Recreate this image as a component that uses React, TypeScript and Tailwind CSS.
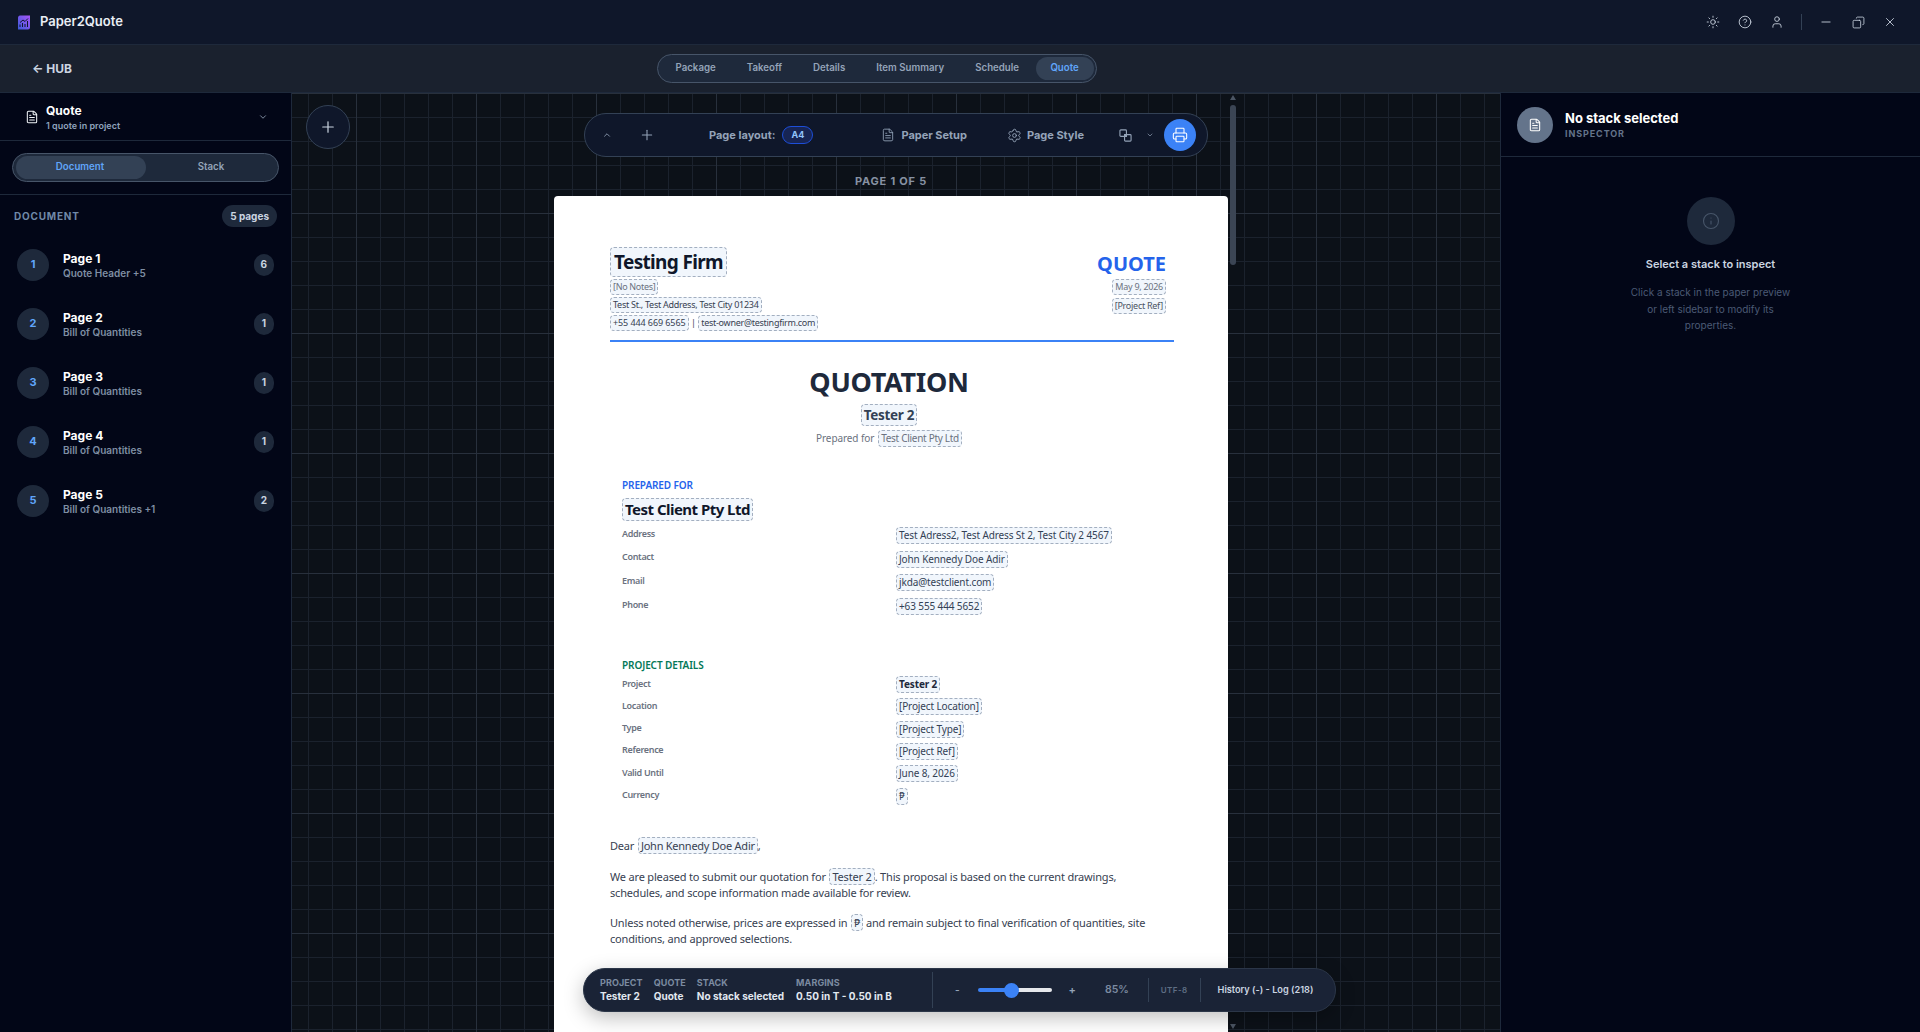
import React from "react";
import { Sun, CircleHelp, User, Minus, Copy, X, ChevronUp, ChevronDown, Plus, FileText, Settings, Printer, Info } from "lucide-react";

function Chip({ c = "", children }: { c?: string; children: React.ReactNode }) {
  return (
    <span className={`inline-block rounded-[4px] border border-dashed border-[#a3afc0] bg-[#f1f6fc] px-[2px] whitespace-nowrap ${c}`}>
      {children}
    </span>
  );
}

function Logo() {
  return (
    <svg width="14" height="15" viewBox="0 0 14 15">
      <defs>
        <linearGradient id="lg" x1="1" y1="0" x2="0" y2="1">
          <stop offset="0" stopColor="#a855f7" />
          <stop offset="1" stopColor="#3b5bdb" />
        </linearGradient>
      </defs>
      <path d="M3 0.5H13V12.5C13 13.6 12.1 14.5 11 14.5H1V3C1 1.6 1.8 0.5 3 0.5Z" fill="url(#lg)" />
      <path d="M3 12V9.5M5.5 12V8M8 12V9M10.5 12V6M3 7.5L6 5L8 6.5L11 3.5" stroke="#0f172a" strokeWidth="1" fill="none" />
    </svg>
  );
}

function Overlap() {
  return (
    <svg width="13" height="13" viewBox="0 0 14 14" fill="none" stroke="#94a3b8" strokeWidth="1.2">
      <rect x="1" y="1" width="7" height="7" rx="1" />
      <rect x="6" y="6" width="7" height="7" rx="1" />
      <rect x="6" y="6" width="2" height="2" fill="#94a3b8" />
    </svg>
  );
}

const tabs = ["Package", "Takeoff", "Details", "Item Summary", "Schedule"];

const pages = [
  ["1", "Page 1", "Quote Header +5", "6"],
  ["2", "Page 2", "Bill of Quantities", "1"],
  ["3", "Page 3", "Bill of Quantities", "1"],
  ["4", "Page 4", "Bill of Quantities", "1"],
  ["5", "Page 5", "Bill of Quantities +1", "2"],
];

const client = [
  ["Address", "Test Adress2, Test Adress St 2, Test City 2 4567"],
  ["Contact", "John Kennedy Doe Adir"],
  ["Email", "jkda@testclient.com"],
  ["Phone", "+63 555 444 5652"],
];

const project = [
  ["Project", "Tester 2"],
  ["Location", "[Project Location]"],
  ["Type", "[Project Type]"],
  ["Reference", "[Project Ref]"],
  ["Valid Until", "June 8, 2026"],
  ["Currency", "₱"],
];

function Stat({ label, value, c = "" }: { label: string; value: string; c?: string }) {
  return (
    <div className={`flex flex-col shrink-0 ${c}`}>
      <span className="text-[9px] leading-[12px] font-bold tracking-[0.01em] text-[#7c8ba1]">{label}</span>
      <span className="text-[10px] leading-[14px] font-bold text-[#e2e8f0] whitespace-nowrap">{value}</span>
    </div>
  );
}

export default function App() {
  return (
    <div className="w-[1920px] h-[1032px] overflow-hidden flex flex-col bg-[#020617] font-['Inter',sans-serif]">
      {/* title bar */}
      <header className="h-[45px] shrink-0 flex items-center bg-[#0f172a] border-b border-[#1e293b] pl-[17px]">
        <Logo />
        <span className="ml-[9px] text-[13px] font-semibold text-[#e9eef5]">Paper2Quote</span>
        <div className="ml-auto flex items-center text-[#cbd5e1]">
          <div className="w-[32px] flex justify-center"><Sun size={14} strokeWidth={1.5} /></div>
          <div className="w-[32px] flex justify-center"><CircleHelp size={14} strokeWidth={1.5} /></div>
          <div className="w-[32px] flex justify-center"><User size={14} strokeWidth={1.5} /></div>
          <div className="w-px h-[16px] bg-[#334155] mx-[8px]" />
          <div className="w-[32px] flex justify-center"><Minus size={14} strokeWidth={1.5} /></div>
          <div className="w-[32px] flex justify-center"><Copy size={13} strokeWidth={1.5} className="scale-x-[-1]" /></div>
          <div className="w-[32px] flex justify-center"><X size={14} strokeWidth={1.5} /></div>
          <div className="w-[14px]" />
        </div>
      </header>

      {/* nav bar */}
      <div className="h-[48px] shrink-0 flex items-center bg-[#1a212e] border-b border-[#1e293b] pl-[32px]">
        <span className="text-[12px] font-bold text-[#cbd5e1] w-[625px] whitespace-nowrap">← HUB</span>
        <nav className="h-[29px] flex items-center rounded-full bg-[#1e293b] border border-[#475569] pl-[2px] pr-[2px]">
          {tabs.map((t) => (
            <span key={t} className="px-[15.5px] text-[9.7px] font-semibold text-[#94a3b8] whitespace-nowrap">{t}</span>
          ))}
          <span className="ml-[1px] h-[23px] w-[58px] flex items-center justify-center rounded-full bg-[#334155] text-[9.7px] font-semibold text-[#60a5fa]">Quote</span>
        </nav>
      </div>

      <div className="flex-1 flex min-h-0">
        {/* left sidebar */}
        <aside className="w-[292px] shrink-0 border-r border-[#1e293b] bg-[#020617] flex flex-col">
          <div className="h-[48px] shrink-0 border-b border-[#1e293b] flex items-center pl-[25px] pr-[23px]">
            <FileText size={14} strokeWidth={1.8} className="text-[#f1f5f9]" />
            <div className="ml-[7px] flex flex-col">
              <span className="text-[12px] leading-[17px] font-bold text-white">Quote</span>
              <span className="text-[9px] leading-[13px] font-semibold text-[#8fa3bd]">1 quote in project</span>
            </div>
            <ChevronDown size={10} strokeWidth={2} className="ml-auto text-[#94a3b8]" />
          </div>
          <div className="h-[54px] shrink-0 border-b border-[#1e293b] flex items-center px-[12px]">
            <div className="w-full h-[29px] rounded-full bg-[#1e293b] border border-[#475569] flex items-center pl-[3px]">
              <span className="w-[130px] h-[23px] pr-[2px] flex items-center justify-center rounded-full bg-[#334155] text-[9.7px] font-semibold text-[#60a5fa]">Document</span>
              <span className="flex-1 pr-[2px] text-center text-[9.7px] font-semibold text-[#94a3b8]">Stack</span>
            </div>
          </div>
          <div className="flex items-center justify-between pl-[14px] pr-[14px] mt-[10px] h-[22px]">
            <span className="text-[10px] font-bold tracking-[0.08em] text-[#7089a8]">DOCUMENT</span>
            <span className="h-[22px] px-[8px] flex items-center rounded-full bg-[#1e293b] text-[10px] font-bold text-[#cbd5e1]">5 pages</span>
          </div>
          <div className="mt-[8px] flex flex-col">
            {pages.map(([n, title, sub, count]) => (
              <div key={n} className="h-[59px] flex items-center pl-[17px] pr-[17px]">
                <span className="w-[32px] h-[32px] shrink-0 rounded-full bg-[#1e293b] flex items-center justify-center text-[11px] font-bold text-[#60a5fa]">{n}</span>
                <div className="ml-[14px] mt-[2px] flex flex-col">
                  <span className="text-[12px] leading-[15px] font-bold text-white">{title}</span>
                  <span className="mt-[1px] text-[10px] leading-[13px] font-semibold text-[#7f8ea3]">{sub}</span>
                </div>
                <span className="ml-auto min-w-[20px] h-[22px] px-[7px] flex items-center justify-center rounded-full bg-[#1e293b] text-[10px] font-bold text-[#cbd5e1]">{count}</span>
              </div>
            ))}
          </div>
        </aside>

        {/* canvas */}
        <main className="relative flex-1 min-w-0 overflow-hidden flex flex-col items-center pt-[20px] bg-[#0c1118] bg-[linear-gradient(#28303c_1px,transparent_1px),linear-gradient(90deg,#28303c_1px,transparent_1px),linear-gradient(#1b222d_1px,transparent_1px),linear-gradient(90deg,#1b222d_1px,transparent_1px)] bg-[size:120px_120px,120px_120px,24px_24px,24px_24px] bg-[position:0_0,64px_0,0_0,16px_0]">
          {/* toolbar */}
          <div className="w-[624px] h-[44px] shrink-0 flex items-center rounded-full bg-[#0f172a] border border-[#334155] text-[#94a3b8] relative">
            <ChevronUp size={10} strokeWidth={2} className="ml-[17px]" />
            <Plus size={16} strokeWidth={1.6} className="ml-[27px]" />
            <span className="ml-[54px] text-[11px] font-bold whitespace-nowrap">Page layout:</span>
            <span className="ml-[7px] w-[31px] h-[18px] flex items-center justify-center rounded-full bg-[#172554] border border-[#1d4ed8] text-[9px] font-bold text-[#93c5fd]">A4</span>
            <FileText size={14} strokeWidth={1.5} className="ml-[68px]" />
            <span className="ml-[6px] text-[11px] font-bold whitespace-nowrap">Paper Setup</span>
            <Settings size={15} strokeWidth={1.5} className="ml-[40px]" />
            <span className="ml-[5px] text-[11px] font-bold whitespace-nowrap">Page Style</span>
            <span className="ml-[35px]"><Overlap /></span>
            <ChevronDown size={8} strokeWidth={2} className="ml-[14px]" />
            <span className="ml-[10px] w-[32px] h-[32px] rounded-full bg-[#3b82f6] flex items-center justify-center text-white">
              <Printer size={16} strokeWidth={1.6} />
            </span>
          </div>

          <div className="w-full flex flex-col items-center pr-[10px]">
            <div className="mt-[17px] h-[14px] flex items-center text-[11px] font-bold tracking-[0.07em] text-[#8792a3] whitespace-nowrap">PAGE 1 OF 5</div>

            {/* paper */}
            <article className="mt-[8px] w-[674px] h-[1000px] shrink-0 rounded-[4px] bg-white pt-[51px] pl-[56px] pr-[54px] font-['Noto_Sans',sans-serif] text-[#1e293b] tracking-[-0.02em]">
              <div className="flex justify-between border-b-2 border-[#3b82f6] pb-[9px]">
                <div className="flex flex-col items-start">
                  <Chip c="h-[30px] px-[3px] text-[19px] leading-[28px] font-bold text-[#0f172a] tracking-[-0.035em]">Testing Firm</Chip>
                  <Chip c="mt-[2px] h-[16px] text-[9px] leading-[14px] text-[#6b7280]">[No Notes]</Chip>
                  <Chip c="mt-[2px] h-[16px] text-[9px] leading-[14px] text-[#374151] tracking-[-0.03em]">Test St., Test Address, Test City 01234</Chip>
                  <div className="mt-[2px] flex items-center gap-[2.5px] text-[9px] text-[#374151]">
                    <Chip c="h-[16px] leading-[14px] tracking-[-0.01em]">+55 444 669 6565</Chip>
                    <span>|</span>
                    <Chip c="h-[16px] leading-[14px] tracking-[-0.03em]">test-owner@testingfirm.com</Chip>
                  </div>
                </div>
                <div className="flex flex-col items-end pr-[8px]">
                  <span className="mt-[3px] text-[20px] leading-[27px] font-bold text-[#2563eb] tracking-normal">QUOTE</span>
                  <Chip c="mt-[2px] h-[16px] text-[9px] leading-[14px] text-[#6b7280] tracking-[-0.03em]">May 9, 2026</Chip>
                  <Chip c="mt-[3px] h-[16px] text-[9px] leading-[14px] text-[#4b5563] tracking-[-0.03em]">[Project Ref]</Chip>
                </div>
              </div>

              <div className="flex flex-col items-center pr-[6px]">
                <h1 className="mt-[21px] text-[27px] leading-[38px] font-bold text-[#1e293b]">QUOTATION</h1>
                <Chip c="mt-[3px] h-[22px] px-[2px] text-[13.5px] leading-[20px] font-bold text-[#334155]">Tester 2</Chip>
                <div className="mt-[4px] flex items-center gap-[4px] text-[10px] text-[#6b7280] tracking-[-0.01em]">
                  <span>Prepared for</span>
                  <Chip c="h-[17px] leading-[15px] tracking-[-0.03em]">Test Client Pty Ltd</Chip>
                </div>
              </div>

              <section className="mt-[31px] pl-[12px] text-[10px]">
                <h2 className="h-[14px] leading-[14px] text-[10px] font-semibold tracking-[-0.01em] text-[#2563eb]">PREPARED FOR</h2>
                <Chip c="mt-[6px] h-[23px] text-[15px] leading-[21px] font-bold text-[#0f172a] tracking-[-0.035em]">Test Client Pty Ltd</Chip>
                <div className="mt-[3px] flex flex-col">
                  {client.map(([k, v]) => (
                    <div key={k} className="h-[23.6px] grid grid-cols-[274px_1fr] items-center">
                      <span className="font-semibold text-[9px] leading-[13px] text-[#6b7280] -mt-[5px]">{k}</span>
                      <span className="flex"><Chip c="h-[17px] leading-[15px] text-[#334155] tracking-[-0.012em]">{v}</Chip></span>
                    </div>
                  ))}
                </div>
              </section>

              <section className="mt-[40px] pl-[12px] text-[10px]">
                <h2 className="h-[14px] leading-[14px] text-[10px] font-semibold tracking-[-0.01em] text-[#047857]">PROJECT DETAILS</h2>
                <div className="mt-[1px] flex flex-col">
                  {project.map(([k, v], i) => (
                    <div key={k} className="h-[22.3px] grid grid-cols-[274px_1fr] items-center">
                      <span className="font-semibold text-[9px] leading-[13px] text-[#6b7280] -mt-[3px]">{k}</span>
                      <span className="flex"><Chip c={i === 0 ? "h-[17px] leading-[15px] font-bold text-[#1e293b] tracking-[-0.012em]" : "h-[17px] leading-[15px] text-[#334155] tracking-[-0.012em]"}>{v}</Chip></span>
                    </div>
                  ))}
                </div>
              </section>

              <div className="mt-[30px] text-[11px] leading-[15px] text-[#374151] tracking-[-0.18px]">
                <p className="h-[17px]">Dear <Chip c="h-[17px] leading-[15px] ml-[1px] tracking-[-0.25px]">John Kennedy Doe Adir</Chip>,</p>
                <p className="mt-[14px] w-[520px]">We are pleased to submit our quotation for <Chip c="h-[17px] leading-[15px] ml-[1px]">Tester 2</Chip>. This proposal is based on the current drawings, schedules, and scope information made available for review.</p>
                <p className="mt-[14px] w-[564px]">Unless noted otherwise, prices are expressed in <Chip c="h-[17px] leading-[15px] ml-[1px]">₱</Chip> and remain subject to final verification of quantities, site conditions, and approved selections.</p>
              </div>
            </article>
          </div>

          {/* add button */}
          <button className="absolute left-[14px] top-[12px] w-[44px] h-[44px] rounded-full bg-[#0f172a] border border-[#334155] flex items-center justify-center text-[#cbd5e1]">
            <Plus size={18} strokeWidth={1.6} />
          </button>

          {/* scrollbar */}
          <div className="absolute left-[938px] top-[12px] w-[6px] h-[160px] rounded-full bg-[#3b4554]" />
          <div className="absolute left-[938px] top-[2px] w-0 h-0 border-x-[3px] border-x-transparent border-b-[5px] border-b-[#4b5563]" />
          <div className="absolute left-[938px] bottom-[3px] w-0 h-0 border-x-[3px] border-x-transparent border-t-[5px] border-t-[#4b5563]" />

          {/* status bar */}
          <div className="absolute left-[291px] bottom-[20px] w-[753px] h-[44px] flex items-center rounded-full bg-[#1a2336] border border-[#2b3648] shadow-[0_6px_20px_rgba(0,0,0,0.25)] pl-[16px]">
            <Stat label="PROJECT" value="Tester 2" />
            <Stat label="QUOTE" value="Quote" c="ml-[11px]" />
            <Stat label="STACK" value="No stack selected" c="ml-[11px]" />
            <Stat label="MARGINS" value="0.50 in T - 0.50 in B" c="ml-[12px]" />
            <div className="ml-[40px] w-px h-[36px] shrink-0 bg-[#334155]" />
            <span className="ml-[22px] shrink-0 text-[10px] font-semibold text-[#94a3b8]">-</span>
            <div className="ml-[18px] relative w-[74px] h-[4px] shrink-0 flex">
              <div className="w-[34px] bg-[#3b82f6] rounded-l-full" />
              <div className="flex-1 bg-[#e5e7eb] rounded-r-full" />
              <div className="absolute left-[26px] -top-[5.5px] w-[15px] h-[15px] rounded-full bg-[#3b82f6]" />
            </div>
            <span className="ml-[17px] shrink-0 text-[11px] font-semibold text-[#94a3b8]">+</span>
            <span className="ml-[29px] shrink-0 text-[10.5px] font-semibold text-[#7c8ba1]">85%</span>
            <div className="ml-[19px] w-px h-[24px] shrink-0 bg-[#334155]" />
            <span className="ml-[12px] shrink-0 text-[8px] font-semibold tracking-[0.05em] text-[#5f6e84] whitespace-nowrap">UTF-8</span>
            <div className="ml-[12px] w-px h-[24px] shrink-0 bg-[#334155]" />
            <span className="ml-[17px] shrink-0 text-[9.2px] font-semibold text-[#cbd5e1] whitespace-nowrap">History (-) - Log (218)</span>
          </div>
        </main>

        {/* right panel */}
        <aside className="w-[420px] shrink-0 border-l border-[#1e293b] bg-[#020617] flex flex-col">
          <div className="h-[64px] shrink-0 border-b border-[#1e293b] flex items-center pl-[16px]">
            <span className="w-[36px] h-[36px] rounded-full bg-[#64748b] flex items-center justify-center text-white">
              <FileText size={14} strokeWidth={1.8} />
            </span>
            <div className="ml-[12px] flex flex-col">
              <span className="text-[13px] leading-[16px] font-bold text-white">No stack selected</span>
              <span className="mt-[1px] text-[9px] leading-[13px] font-bold tracking-[0.1em] text-[#64748b]">INSPECTOR</span>
            </div>
          </div>
          <div className="flex flex-col items-center pt-[40px]">
            <span className="w-[48px] h-[48px] rounded-full bg-[#1e293b] flex items-center justify-center text-[#475569]">
              <Info size={18} strokeWidth={1.5} />
            </span>
            <span className="mt-[11px] text-[11px] leading-[16px] font-semibold text-[#cbd5e1]">Select a stack to inspect</span>
            <p className="mt-[12px] w-[168px] text-center text-[10px] leading-[16.5px] text-[#4b5a75]">Click a stack in the paper preview or left sidebar to modify its properties.</p>
          </div>
        </aside>
      </div>
    </div>
  );
}
